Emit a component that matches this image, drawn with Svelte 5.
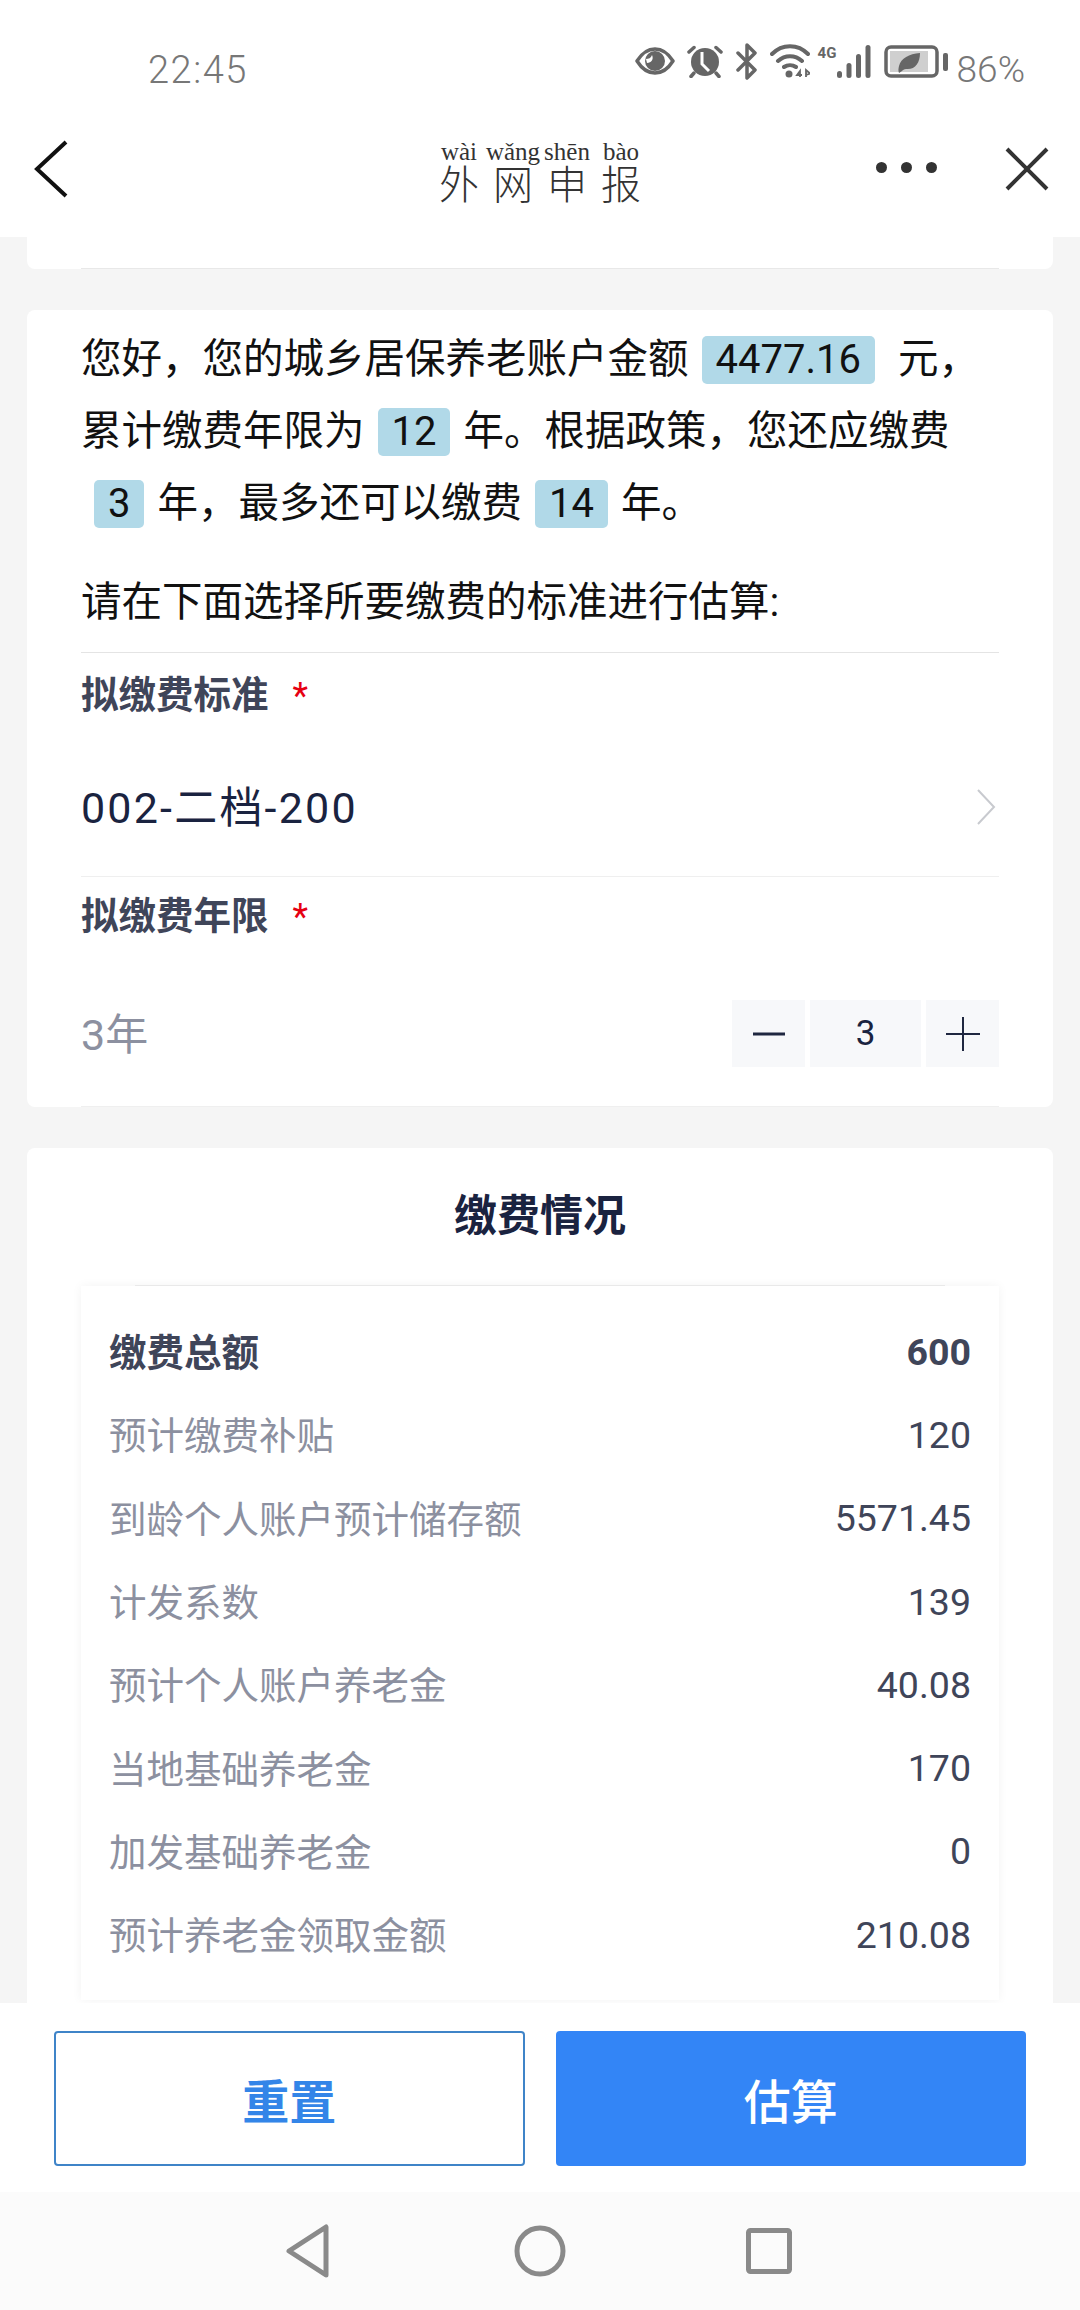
<script>
  let rows = [
    { label: '缴费总额', value: '600', total: true },
    { label: '预计缴费补贴', value: '120' },
    { label: '到龄个人账户预计储存额', value: '5571.45' },
    { label: '计发系数', value: '139' },
    { label: '预计个人账户养老金', value: '40.08' },
    { label: '当地基础养老金', value: '170' },
    { label: '加发基础养老金', value: '0' },
    { label: '预计养老金领取金额', value: '210.08' },
  ];
  let title = [
    ['外', 'wài'],
    ['网', 'wǎng'],
    ['申', 'shēn'],
    ['报', 'bào'],
  ];
  let years = $state(3);
</script>

<div class="page">
  <div class="status">
    <span class="time">22:45</span>
    <div class="status-icons">
      <svg class="ic-eye" width="40" height="28" viewBox="0 0 40 28">
        <path d="M2 14C7 6 13 2 20 2s13 4 18 12C33 22 27 26 20 26S7 22 2 14z" fill="none" stroke="#666" stroke-width="3.500" stroke-linejoin="round" />
        <circle cx="20" cy="14" r="10" fill="#666" />
        <path d="M11 12c2.500 0 5-1 6-4 2 4-.5 8-5 8z" fill="#fff" />
      </svg>
      <svg class="ic-alarm" width="36" height="33" viewBox="0 0 36 33">
        <circle cx="18" cy="17" r="14" fill="#666" />
        <path d="M15 7v12l7 7" fill="none" stroke="#fff" stroke-width="3" />
        <path d="M2 7l5-4.500M34 7l-5-4.500M7 28l-3 3.500M29 28l3 3.500" stroke="#666" stroke-width="3.500" stroke-linecap="round" />
      </svg>
      <svg class="ic-bt" width="22" height="37" viewBox="0 0 22 37">
        <path d="M2 10l17 17-8 8V2l8 8L2 27" fill="none" stroke="#666" stroke-width="3.500" stroke-linejoin="round" stroke-linecap="round" />
      </svg>
      <svg class="ic-wifi" width="40" height="34" viewBox="0 0 40 34">
        <path d="M2 10c10-10.500 26-10.500 36 0M8 17c7-6.500 17-6.500 24 0M14 23c3.500-2.500 8.500-2.500 12 0" fill="none" stroke="#666" stroke-width="4" stroke-linecap="round" />
        <circle cx="19" cy="30" r="3.500" fill="#666" />
        <path d="M30 33v-6l-3 4h5M36 33v-7l4 3.500-4 1.500" fill="none" stroke="#666" stroke-width="1.800" />
      </svg>
      <div class="signal">
        <span class="net">4G</span>
        <svg width="34" height="33" viewBox="0 0 34 33">
          <rect x="0" y="26" width="5" height="7" rx="2.500" fill="#666" />
          <rect x="9.500" y="18" width="5" height="15" rx="2.500" fill="#666" />
          <rect x="19" y="9" width="5" height="24" rx="2.500" fill="#666" />
          <rect x="28.500" y="0" width="5" height="33" rx="2.500" fill="#666" />
        </svg>
      </div>
      <svg class="ic-batt" width="64" height="33" viewBox="0 0 64 33">
        <rect x="2" y="2" width="51" height="29" rx="5" fill="none" stroke="#666" stroke-width="3.500" />
        <rect x="6" y="6" width="38" height="21" fill="#cfcfcf" />
        <path d="M15 28c-1-2-.5-5 0-7 2-8 10-12 21-13 0 10-5 17-14 16-2 0-3 1-4 2z" fill="#666" />
        <rect x="59" y="8" width="5" height="18" rx="2" fill="#666" />
      </svg>
      <span class="pct">86%</span>
    </div>
  </div>

  <div class="navbar">
    <svg class="nav-back" width="34" height="58" viewBox="0 0 34 58">
      <path d="M32 2L3 29l29 27" fill="none" stroke="#111" stroke-width="4" />
    </svg>
    <div class="nav-title">
      {#each title as [ch, py]}
        <div class="glyph">
          <span class="py">{py}</span>
          <span class="ch">{ch}</span>
        </div>
      {/each}
    </div>
    <div class="nav-more"><i></i><i></i><i></i></div>
    <svg class="nav-close" width="44" height="44" viewBox="0 0 44 44">
      <path d="M2 2l40 40M42 2L2 42" fill="none" stroke="#333" stroke-width="4" />
    </svg>
  </div>

  <div class="content">
    <div class="card stub"><div class="stub-line"></div></div>

    <div class="card intro">
      <p class="lines">
        您好，您的城乡居保养老账户金额<span class="hl">4477.16</span> 元，<br />
        累计缴费年限为<span class="hl">12</span>年。根据政策，您还应缴费<br />
        <span class="hl">3</span>年，最多还可以缴费<span class="hl">14</span>年。
      </p>
      <p class="hint">请在下面选择所要缴费的标准进行估算:</p>

      <div class="field first">
        <div class="label">拟缴费标准<span class="req">*</span></div>
        <div class="value-row">
          <span class="value spaced">002-二档-200</span>
          <svg width="20" height="36" viewBox="0 0 20 36">
            <path d="M2 1l16 17L2 35" fill="none" stroke="#c8cacf" stroke-width="2" />
          </svg>
        </div>
      </div>

      <div class="field second">
        <div class="label">拟缴费年限<span class="req">*</span></div>
        <div class="value-row stepper-row">
          <span class="value muted">{years}年</span>
          <div class="stepper">
            <button class="step" aria-label="减少" onclick={() => (years = Math.max(1, years - 1))}>
              <svg width="34" height="34" viewBox="0 0 34 34"><path d="M1 17h32" stroke="#1f2740" stroke-width="3" /></svg>
            </button>
            <span class="count">{years}</span>
            <button class="step" aria-label="增加" onclick={() => (years = years + 1)}>
              <svg width="34" height="34" viewBox="0 0 34 34"><path d="M0 17h34M17 0v34" stroke="#1f2740" stroke-width="2" /></svg>
            </button>
          </div>
        </div>
      </div>
    </div>

    <div class="card summary">
      <h2>缴费情况</h2>
      <div class="inner">
        {#each rows as row}
          <div class="row" class:total={row.total}>
            <span class="row-label">{row.label}</span>
            <span class="row-value">{row.value}</span>
          </div>
        {/each}
      </div>
    </div>
  </div>

  <div class="footer">
    <button class="btn ghost">重置</button>
    <button class="btn solid">估算</button>
  </div>

  <div class="sysnav">
    <svg width="46" height="54" viewBox="0 0 46 54">
      <path d="M41 3v48L4 27z" fill="none" stroke="#8a8a8a" stroke-width="5" stroke-linejoin="round" />
    </svg>
    <svg width="52" height="52" viewBox="0 0 52 52">
      <circle cx="26" cy="26" r="23" fill="none" stroke="#8a8a8a" stroke-width="5" />
    </svg>
    <svg width="46" height="46" viewBox="0 0 46 46">
      <rect x="2.500" y="2.500" width="41" height="41" rx="2" fill="none" stroke="#8a8a8a" stroke-width="5" />
    </svg>
  </div>
</div>

<style>
  :global(body) {
    margin: 0;
    background: #fff;
  }
  .page {
    width: 1080px;
    height: 2310px;
    display: flex;
    flex-direction: column;
    overflow: hidden;
    font-family: Roboto, "Noto Sans CJK SC", sans-serif;
    color: #1a2340;
  }
  .status {
    height: 100px;
    flex-shrink: 0;
    display: flex;
    align-items: flex-start;
    justify-content: space-between;
    padding: 43px 55px 0 148px;
    box-sizing: border-box;
  }
  .time {
    font-size: 38px;
    font-weight: 300;
    line-height: 50px;
    margin-top: 2px;
    color: #777;
    letter-spacing: 1.500px;
  }
  .status-icons {
    display: flex;
    align-items: center;
    height: 36px;
  }
  .ic-alarm {
    margin-left: 12px;
  }
  .ic-bt {
    margin-left: 13px;
  }
  .ic-wifi {
    margin-left: 12px;
  }
  .signal {
    position: relative;
    width: 53px;
    margin-left: 8px;
    display: flex;
    justify-content: flex-end;
  }
  .net {
    position: absolute;
    left: 0;
    top: -1px;
    font-size: 15px;
    font-weight: 700;
    color: #666;
    line-height: 18px;
  }
  .ic-batt {
    margin-left: 13px;
  }
  .pct {
    font-size: 37px;
    font-weight: 300;
    color: #777;
    line-height: 40px;
    margin: 18px 0 0 9px;
  }
  .navbar {
    height: 137px;
    flex-shrink: 0;
    display: flex;
    align-items: center;
    position: relative;
    background: #fff;
  }
  .nav-back {
    position: absolute;
    left: 34px;
    top: 40px;
  }
  .nav-title {
    position: absolute;
    left: 0;
    right: 0;
    top: 41px;
    display: flex;
    justify-content: center;
    color: #333;
  }
  .glyph {
    width: 54px;
    display: flex;
    flex-direction: column;
    align-items: center;
    white-space: nowrap;
  }
  .py {
    font-family: "Liberation Serif", serif;
    font-size: 25px;
    line-height: 22px;
  }
  .ch {
    font-size: 40px;
    font-weight: 300;
    line-height: 38px;
    margin-top: 4px;
  }
  .nav-more {
    position: absolute;
    left: 876px;
    top: 62px;
    display: flex;
    gap: 14px;
  }
  .nav-more i {
    width: 11px;
    height: 11px;
    border-radius: 50%;
    background: #333;
  }
  .nav-close {
    position: absolute;
    left: 1005px;
    top: 47px;
  }
  .content {
    flex: 1;
    min-height: 0;
    overflow: hidden;
    background: #f5f5f5;
    padding: 0 27px;
    display: flex;
    flex-direction: column;
    gap: 41px;
  }
  .card {
    background: #fff;
    border-radius: 8px;
    box-sizing: border-box;
    flex-shrink: 0;
  }
  .stub {
    height: 32px;
    border-radius: 0 0 8px 8px;
    padding: 0 54px;
  }
  .stub-line {
    height: 32px;
    box-sizing: border-box;
    border-bottom: 1px solid #e8e8e8;
  }
  .intro {
    height: 797px;
    padding: 13px 54px 0;
  }
  .lines {
    margin: 0;
    font-size: 40.500px;
    line-height: 72px;
    color: #111;
  }
  .hl {
    display: inline-block;
    height: 48px;
    line-height: 48px;
    padding: 0 14px;
    margin: 0 13px 4px;
    background: #b1d9e8;
    border-radius: 5px;
    vertical-align: middle;
    font-size: 40px;
  }
  .hint {
    margin: 27px 0 0;
    font-size: 40.500px;
    line-height: 72px;
    color: #111;
    padding-bottom: 14px;
    border-bottom: 1px solid #e4e4e4;
  }
  .field {
    box-sizing: border-box;
    border-bottom: 1px solid #efefef;
  }
  .field.first {
    height: 224px;
    padding-top: 17px;
  }
  .field.second {
    height: 230px;
    padding-top: 14px;
  }
  .label {
    font-size: 37.500px;
    font-weight: 700;
    line-height: 50px;
    color: #3f4559;
  }
  .req {
    color: #e60012;
    font-weight: 400;
    margin-left: 24px;
    font-size: 36px;
  }
  .value-row {
    display: flex;
    align-items: center;
    justify-content: space-between;
    height: 100px;
    margin-top: 36px;
    padding-right: 3px;
  }
  .stepper-row {
    height: 67px;
    margin-top: 58px;
    padding-right: 0;
  }
  .value {
    font-size: 43px;
    color: #1a2340;
    padding-bottom: 6px;
  }
  .spaced {
    letter-spacing: 2.200px;
  }
  .muted {
    color: #8c90a0;
  }
  .stepper {
    display: flex;
    gap: 5px;
    height: 67px;
  }
  .step {
    width: 73px;
    height: 67px;
    padding: 0;
    border: 0;
    background: #f7f8fa;
    display: flex;
    align-items: center;
    justify-content: center;
  }
  .count {
    width: 111px;
    background: #f7f8fa;
    text-align: center;
    line-height: 67px;
    font-size: 35px;
  }
  .summary {
    padding: 0 54px;
    height: 1200px;
  }
  h2 {
    margin: 0 54px;
    height: 138px;
    box-sizing: border-box;
    line-height: 136px;
    text-align: center;
    font-size: 43px;
    font-weight: 700;
    color: #1a2340;
    border-bottom: 1px solid #efefef;
  }
  .inner {
    box-shadow: 0 0 10px rgba(0, 0, 0, 0.05);
    padding: 24px 28px;
  }
  .row {
    height: 83.300px;
    display: flex;
    align-items: center;
    justify-content: space-between;
    font-size: 37.500px;
  }
  .row-label {
    color: #8c90a0;
    padding-bottom: 4px;
  }
  .row-value {
    color: #3f4559;
  }
  .total .row-label,
  .total .row-value {
    color: #3f4559;
    font-weight: 700;
  }
  .footer {
    height: 189px;
    flex-shrink: 0;
    display: grid;
    grid-template-columns: 1fr 1fr;
    gap: 31px;
    padding: 28px 54px 26px;
    box-sizing: border-box;
    background: #fff;
  }
  .btn {
    border-radius: 4px;
    font-family: inherit;
    font-size: 47px;
    padding: 0;
  }
  .ghost {
    background: #fff;
    border: 2px solid #3f84c8;
    color: #3385e8;
    font-weight: 700;
  }
  .solid {
    background: #3385f6;
    border: 0;
    color: #fff;
    font-weight: 500;
  }
  .sysnav {
    height: 118px;
    flex-shrink: 0;
    background: #fbfbfb;
    display: flex;
    align-items: center;
    padding-left: 285px;
    box-sizing: border-box;
  }
  .sysnav svg:nth-child(2) {
    margin-left: 183px;
  }
  .sysnav svg:nth-child(3) {
    margin-left: 180px;
  }
</style>
